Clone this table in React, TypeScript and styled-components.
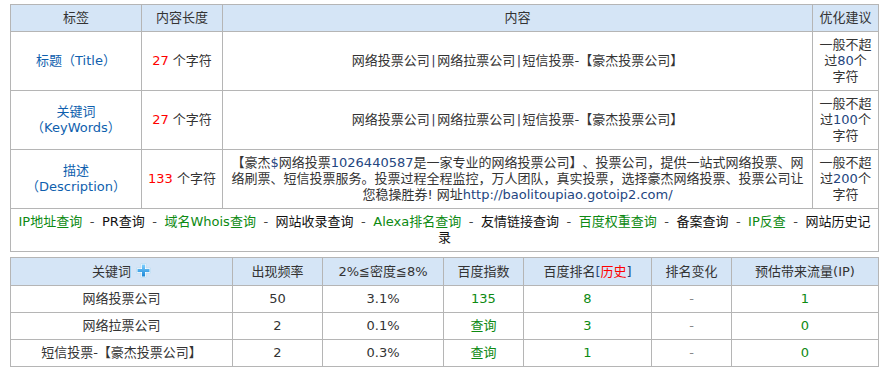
import React from 'react'
import styled, { createGlobalStyle } from 'styled-components'

const GlobalStyle = createGlobalStyle`
  body {
    margin: 0;
    background: #fff;
    font-family: "DejaVu Sans", "Noto Sans CJK SC", sans-serif;
    font-size: 13px;
    color: #333;
    text-spacing-trim: space-all;
  }
`

const Page = styled.div`
  padding: 4px 0 0 10px;
  display: flex;
  flex-direction: column;
  gap: 5px;
`

const Table = styled.table`
  border-collapse: collapse;
  table-layout: fixed;
  width: 868px;
`

const Cell = styled.td<{ $h?: number; $pad?: number }>`
  border: 1px solid #b5b5b5;
  text-align: center;
  vertical-align: middle;
  line-height: 16px;
  padding: 0 ${({ $pad }) => $pad ?? 5}px;
  height: ${({ $h }) => ($h ? `${$h}px` : 'auto')};
`

const Head = styled(Cell).attrs({ as: 'th' })`
  background: #d5e5f6;
  font-weight: normal;
  color: #333;
`

const Label = styled.span`
  color: #0f5fae;
`

const Red = styled.span`
  color: #ff0000;
`

const Green = styled.span`
  color: #0d8a12;
`

const Latin = styled.span`
  color: #24467f;
`

const Pipe = styled.span`
  margin: 0 1.5px;
  color: #3a3a5a;
`

const Dash = styled.span`
  color: #888;
`

const Sep = styled.span`
  margin: 0 7.5px;
  color: #444;
`

const LinkItem = styled.span<{ $green?: boolean }>`
  color: ${({ $green }) => ($green ? '#0d8a12' : '#111')};
`

const PlusIcon = () => (
  <svg width="15" height="15" viewBox="0 0 15 15" style={{ verticalAlign: '-2px', marginLeft: 5 }}>
    <defs>
      <linearGradient id="pg" x1="0" y1="0" x2="0" y2="1">
        <stop offset="0" stopColor="#7fd0ff" />
        <stop offset="1" stopColor="#1a86d6" />
      </linearGradient>
    </defs>
    <path
      d="M5 0.5h5v4.5h4.5v5h-4.5v4.5h-5v-4.5h-4.5v-5h4.5z"
      fill="#fff"
      stroke="#bcdcf2"
      strokeWidth="0.8"
    />
    <path d="M6 1.5h3v4.5h4.5v3h-4.5v4.5h-3v-4.5h-4.5v-3h4.5z" fill="url(#pg)" />
  </svg>
)

const links: [string, boolean][] = [
  ['IP地址查询', true],
  ['PR查询', false],
  ['域名Whois查询', true],
  ['网站收录查询', false],
  ['Alexa排名查询', true],
  ['友情链接查询', false],
  ['百度权重查询', true],
  ['备案查询', false],
  ['IP反查', true],
  ['网站历史记录', false],
]

const keywords = [
  { word: '网络投票公司', freq: '50', density: '3.1%', index: '135', rank: '8', ip: '1' },
  { word: '网络拉票公司', freq: '2', density: '0.1%', index: '查询', rank: '3', ip: '0' },
  { word: '短信投票-【豪杰投票公司】', freq: '2', density: '0.3%', index: '查询', rank: '1', ip: '0' },
]

const TitleContent = () => (
  <>
    网络投票公司<Pipe>|</Pipe>网络拉票公司<Pipe>|</Pipe>短信投票-【豪杰投票公司】
  </>
)

const App: React.FC = () => {
  return (
    <>
      <GlobalStyle />
      <Page>
        <Table>
          <colgroup>
            <col style={{ width: 131 }} />
            <col style={{ width: 81 }} />
            <col style={{ width: 590 }} />
            <col style={{ width: 66 }} />
          </colgroup>
          <tbody>
            <tr>
              <Head $h={26}>标签</Head>
              <Head>内容长度</Head>
              <Head>内容</Head>
              <Head $pad={3}>优化建议</Head>
            </tr>
            <tr>
              <Cell $h={58}>
                <Label>标题（Title）</Label>
              </Cell>
              <Cell>
                <Red>27</Red> 个字符
              </Cell>
              <Cell>
                <TitleContent />
              </Cell>
              <Cell>
                一般不超过<Latin>80</Latin>个字符
              </Cell>
            </tr>
            <tr>
              <Cell $h={58}>
                <Label>关键词（KeyWords）</Label>
              </Cell>
              <Cell>
                <Red>27</Red> 个字符
              </Cell>
              <Cell>
                <TitleContent />
              </Cell>
              <Cell>
                一般不超过<Latin>100</Latin>个字符
              </Cell>
            </tr>
            <tr>
              <Cell $h={58}>
                <Label>描述（Description）</Label>
              </Cell>
              <Cell>
                <Red>133</Red> 个字符
              </Cell>
              <Cell>
                【豪杰<Latin>$</Latin>网络投票<Latin>1026440587</Latin>是一家专业的网络投票公司】、投票公司，提供一站式网络投票、网络刷票、短信投票服务。投票过程全程监控，万人团队，真实投票，选择豪杰网络投票、投票公司让您稳操胜券!
                网址<Latin>http://baolitoupiao.gotoip2.com/</Latin>
              </Cell>
              <Cell>
                一般不超过<Latin>200</Latin>个字符
              </Cell>
            </tr>
            <tr>
              <Cell colSpan={4} $h={42} $pad={5}>
                {links.map(([t, g], i) => (
                  <React.Fragment key={t}>
                    {i > 0 && <Sep>-</Sep>}
                    <LinkItem $green={g}>{t}</LinkItem>
                  </React.Fragment>
                ))}
              </Cell>
            </tr>
          </tbody>
        </Table>

        <Table>
          <colgroup>
            <col style={{ width: 222 }} />
            <col style={{ width: 90 }} />
            <col style={{ width: 121 }} />
            <col style={{ width: 80 }} />
            <col style={{ width: 128 }} />
            <col style={{ width: 80 }} />
            <col style={{ width: 147 }} />
          </colgroup>
          <tbody>
            <tr>
              <Head $h={27}>
                关键词
                <PlusIcon />
              </Head>
              <Head>出现频率</Head>
              <Head>2%≦密度≦8%</Head>
              <Head>百度指数</Head>
              <Head>
                百度排名<Latin>[</Latin>
                <Red>历史</Red>
                <Latin>]</Latin>
              </Head>
              <Head>排名变化</Head>
              <Head>预估带来流量(IP)</Head>
            </tr>
            {keywords.map((k) => (
              <tr key={k.word}>
                <Cell $h={26}>{k.word}</Cell>
                <Cell>{k.freq}</Cell>
                <Cell>{k.density}</Cell>
                <Cell>
                  <Green>{k.index}</Green>
                </Cell>
                <Cell>
                  <Green>{k.rank}</Green>
                </Cell>
                <Cell>
                  <Dash>-</Dash>
                </Cell>
                <Cell>
                  <Green>{k.ip}</Green>
                </Cell>
              </tr>
            ))}
          </tbody>
        </Table>
      </Page>
    </>
  )
}

export default App
